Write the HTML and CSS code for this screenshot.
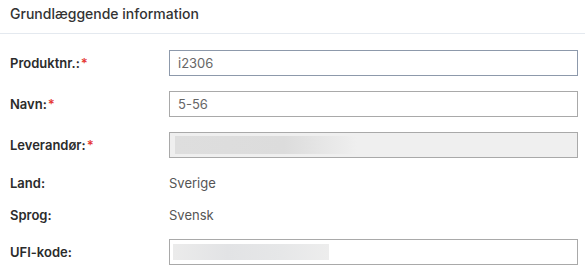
FILE: index.html
```html
<!DOCTYPE html>
<html>
  <head>
    <title>Grundlæggende information</title>
    <meta name="viewport" content="width=device-width, initial-scale=1.0">
    <link rel="stylesheet" href="styles.css">
  </head>
  <body>
    <section class="panel">
      <header class="panel-head">
        <h2>Grundlæggende information</h2>
      </header>
      <div class="panel-body">
        <div class="row">
          <label>Produktnr.:<span class="req">*</span></label>
          <input type="text" class="field focus" value="i2306">
        </div>
        <div class="row">
          <label>Navn:<span class="req">*</span></label>
          <input type="text" class="field" value="5-56">
        </div>
        <div class="row">
          <label>Leverandør:<span class="req">*</span></label>
          <div class="field disabled">
            <span class="skeleton wide"></span>
          </div>
        </div>
        <div class="row text">
          <label>Land:</label>
          <span class="value">Sverige</span>
        </div>
        <div class="row text">
          <label>Sprog:</label>
          <span class="value">Svensk</span>
        </div>
        <div class="row last">
          <label>UFI-kode:</label>
          <div class="field">
            <span class="skeleton"></span>
          </div>
        </div>
      </div>
    </section>
  </body>
</html>
```

FILE: styles.css
```css
* {
  margin: 0;
  padding: 0;
  box-sizing: border-box;
  font-family: Inter, "Noto Sans", sans-serif;
}
body {
  background: #fff;
  color: #333;
}
.panel-head {
  height: 34px;
  padding: 5px 10px 0;
  border-bottom: 1px solid #e4e9ef;
}
.panel-head h2 {
  font-size: 14px;
  font-weight: 500;
  line-height: 18px;
  color: #333;
}
.panel-body {
  display: flex;
  flex-direction: column;
  padding: 16px 7px 0 10px;
}
.row {
  display: flex;
  align-items: center;
  height: 26px;
  margin-bottom: 15px;
}
.row.text {
  height: 20px;
  margin-bottom: 12px;
}
.row.last {
  margin-top: 2px;
}
label {
  width: 159px;
  flex-shrink: 0;
  font-size: 13px;
  font-weight: 600;
  color: #2b2b2b;
}
.req {
  color: #e53935;
  margin-left: 1px;
}
.value {
  font-size: 13px;
  color: #555;
}
.field {
  display: flex;
  align-items: center;
  width: 409px;
  height: 26px;
  padding: 0 8px;
  border: 1px solid #a9a9a9;
  background: #fff;
  font-size: 13px;
  color: #666;
  outline: none;
}
.field.focus {
  border-color: #8d99ab;
}
.field.disabled {
  background: #efefef;
  padding: 0 4px;
}
.skeleton {
  display: block;
  width: 156px;
  height: 16px;
  margin-left: -5px;
  background: linear-gradient(90deg, #ebebeb, #e2e3e5 35%, #e6e7e8 70%, #ededed);
}
.skeleton.wide {
  width: 182px;
  height: 18px;
  margin-left: 1px;
  background: linear-gradient(90deg, #dedede, #dcdcdc 60%, #efefef);
}
```
